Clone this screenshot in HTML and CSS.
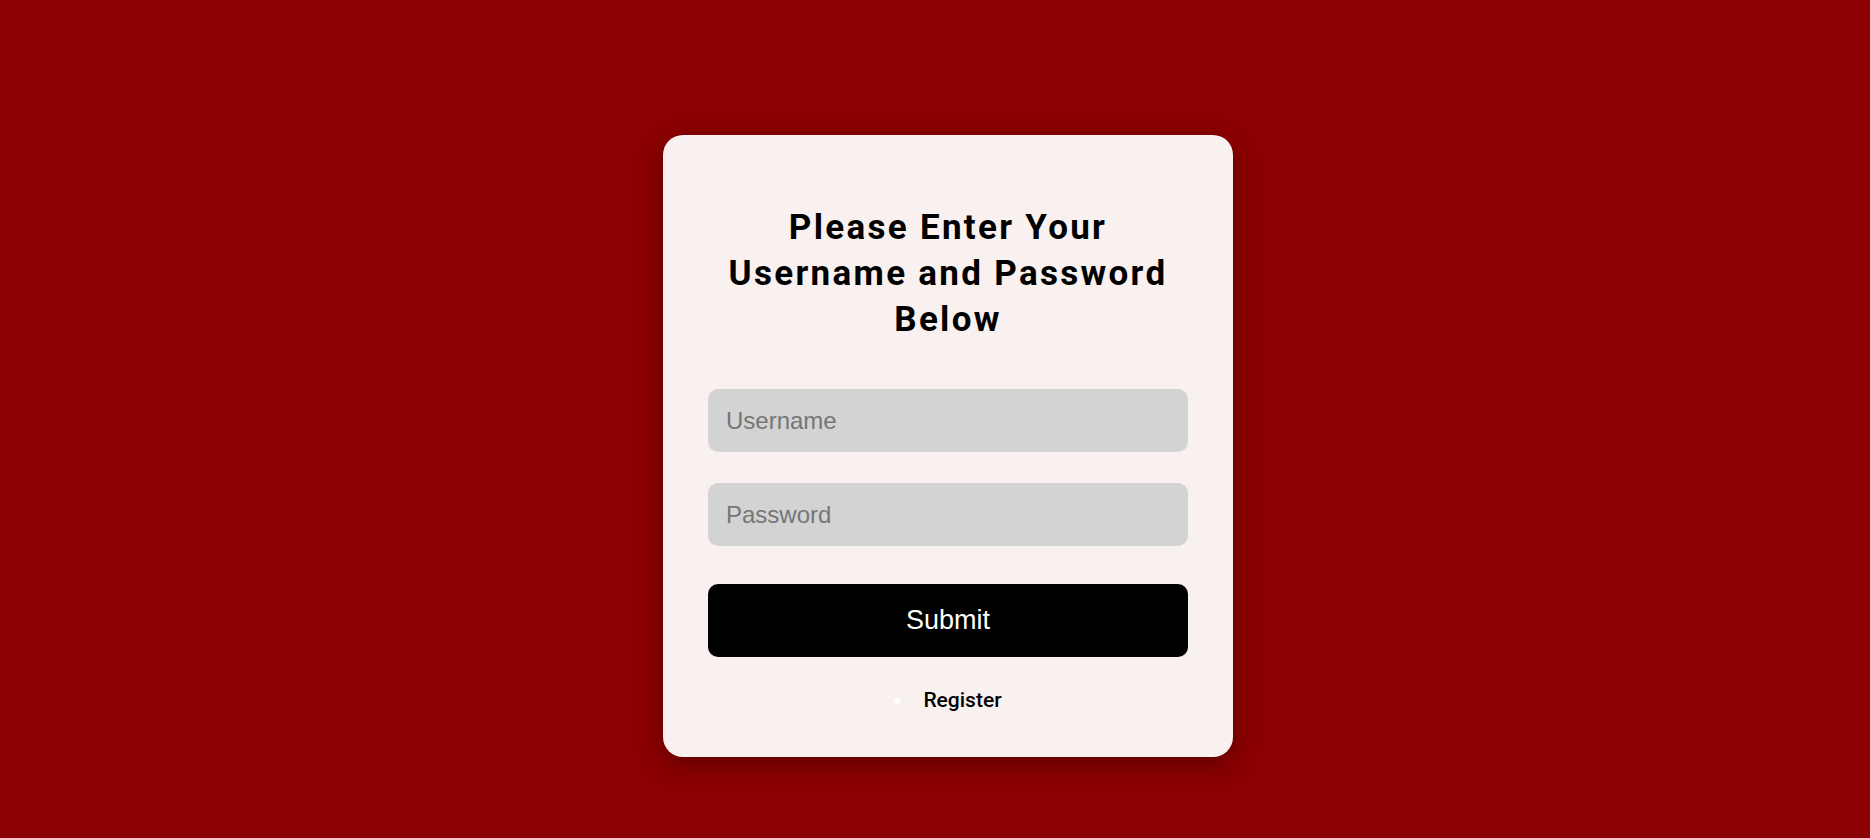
FILE: index.html
```html
<!DOCTYPE html>
<html lang="en">
<head>
<meta charset="utf-8">
<title>Login</title>
<link rel="stylesheet" href="styles.css">
</head>
<body>
<main class="page">
  <section class="card">
    <h1 class="title">Please Enter Your Username and Password Below</h1>
    <form class="form">
      <input class="field" type="text" placeholder="Username">
      <input class="field" type="password" placeholder="Password">
      <button class="submit" type="button">Submit</button>
    </form>
    <ul class="links">
      <li class="link-item"><a class="link" href="#">Register</a></li>
    </ul>
  </section>
</main>
</body>
</html>
```
FILE: styles.css
```css
html, body {
  margin: 0;
  padding: 0;
}
body {
  background: #8b0000;
  font-family: Roboto, "Liberation Sans", sans-serif;
  height: 838px;
  overflow: hidden;
}
.page {
  display: flex;
  justify-content: center;
  padding-top: 135px;
  padding-left: 26px;
}
.card {
  width: 480px;
  padding: 70px 45px 44px;
  background: #f9f0f0;
  border-radius: 20px;
  box-shadow: 0 8px 24px rgba(0, 0, 0, 0.3);
}
.title {
  margin: 0 0 46px;
  font-family: Roboto, sans-serif;
  font-weight: 700;
  font-size: 35px;
  line-height: 46px;
  letter-spacing: 2.3px;
  text-align: center;
  color: #000;
}
.form {
  display: flex;
  flex-direction: column;
}
.field {
  box-sizing: border-box;
  height: 63px;
  margin-top: 31px;
  padding: 0 18px;
  border: none;
  border-radius: 10px;
  background: #d3d3d3;
  font-family: "Liberation Sans", Arial, sans-serif;
  font-size: 24px;
  color: #000;
  outline: none;
}
.field:first-child {
  margin-top: 0;
}
.field::placeholder {
  color: #767676;
}
.submit {
  height: 73px;
  margin-top: 38px;
  border: none;
  border-radius: 10px;
  background: #000;
  color: #fff;
  font-family: "Liberation Sans", Arial, sans-serif;
  font-size: 27px;
  cursor: pointer;
}
.links {
  margin: 30px 0 0;
  padding: 0;
  list-style: disc inside;
  text-align: center;
}
.link-item {
  color: #fff;
  font-size: 21px;
  line-height: 26px;
}
.link {
  color: #000;
  text-decoration: none;
  font-weight: 500;
  margin-left: 1px;
}
```
